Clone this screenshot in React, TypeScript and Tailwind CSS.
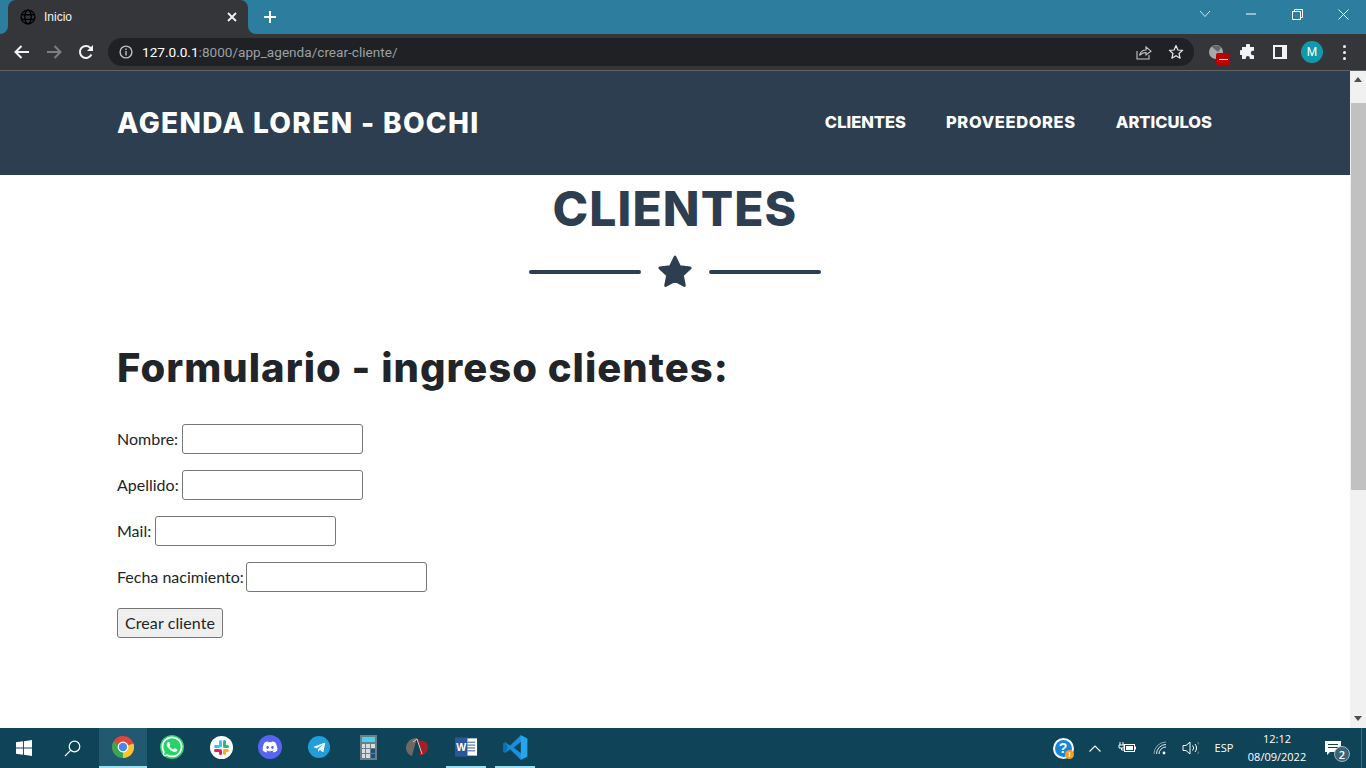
import React from "react";
import { FaWhatsapp, FaDiscord, FaTelegramPlane } from "react-icons/fa";

const Heading = { fontFamily: '"Inter", "Open Sans", sans-serif' };

function Star() {
  return (
    <svg width="36" height="34" viewBox="0 0 36 34">
      <path d="M18 2 L22.6 11.6 L33.2 13 L25.4 20.2 L27.4 30.6 L18 25.6 L8.6 30.6 L10.6 20.2 L2.8 13 L13.4 11.6 Z" fill="#2c3e50" stroke="#2c3e50" strokeWidth="2.8" strokeLinejoin="round" />
    </svg>
  );
}

function Field({ label, gap }: { label: string; gap: string }) {
  return (
    <p className="flex items-center h-[30px] mb-4">
      <label className={gap}>{label}</label>
      <input type="text" className="w-[181px] h-[30px] bg-white border border-[#767676] rounded-[3px]" />
    </p>
  );
}

function TabCorner({ flip }: { flip?: boolean }) {
  return (
    <svg width="8" height="8" viewBox="0 0 8 8" className={flip ? "-scale-x-100" : ""}>
      <path d="M8 0 V8 H0 A8 8 0 0 0 8 0 Z" fill="#35363a" />
    </svg>
  );
}

function TitleBar() {
  return (
    <div className="h-[34px] bg-[#2c7d9e] flex items-start pl-2 relative">
      <div className="w-[240px] h-[34px] bg-[#35363a] rounded-t-[8px] flex items-center pl-3 pr-[11px] text-white text-xs relative">
        <div className="absolute -left-2 bottom-0 flex"><TabCorner /></div>
        <div className="absolute -right-2 bottom-0 flex"><TabCorner flip /></div>
        <svg width="16" height="16" viewBox="0 0 16 16" fill="none" stroke="#000" strokeWidth="1.35">
          <circle cx="8" cy="8" r="6.9" />
          <ellipse cx="8" cy="8" rx="3.2" ry="6.9" />
          <path d="M1.2 5.7 H14.8 M1.2 10.3 H14.8" />
        </svg>
        <span className="ml-2 flex-1 text-[12px] text-[#f1f3f4]" style={{ fontFamily: '"Liberation Sans", sans-serif' }}>Inicio</span>
        <svg width="10" height="10" viewBox="0 0 10 10" stroke="#f1f3f4" strokeWidth="1.8"><path d="M1 1 L9 9 M9 1 L1 9" /></svg>
      </div>
      <svg width="14" height="14" viewBox="0 0 14 14" stroke="#fff" strokeWidth="2" className="ml-[15px] mt-2.5"><path d="M7 1 V13 M1 7 H13" /></svg>
      <div className="flex-1" />
      <div className="flex items-center h-[28px] text-white">
        <div className="w-[46px] flex justify-center"><svg width="12" height="8" viewBox="0 0 12 8" fill="none" stroke="#d5e6ee" strokeWidth="1"><path d="M1 1 L6 6.5 L11 1" /></svg></div>
        <div className="w-[46px] flex justify-center"><svg width="10" height="2" viewBox="0 0 10 2"><path d="M0 1 H10" stroke="#fff" strokeWidth="1" /></svg></div>
        <div className="w-[46px] flex justify-center"><svg width="11" height="11" viewBox="0 0 11 11" fill="none" stroke="#fff" strokeWidth="1"><path d="M0.5 2.5 H8.5 V10.5 H0.5 Z M2.5 2.5 V0.5 H10.5 V8.5 H8.5" /></svg></div>
        <div className="w-[46px] flex justify-center"><svg width="11" height="11" viewBox="0 0 11 11" stroke="#fff" strokeWidth="1"><path d="M0.5 0.5 L10.5 10.5 M10.5 0.5 L0.5 10.5" /></svg></div>
      </div>
    </div>
  );
}

function IconSlot({ w, children }: { w: string; children: React.ReactNode }) {
  return <div className={`${w} flex justify-center items-center shrink-0`}>{children}</div>;
}

function Toolbar() {
  return (
    <div className="h-[36px] bg-[#35363a] flex items-center border-b border-[#5f6368] box-content">
      <div className="w-[108px] flex items-center pl-[6px] shrink-0">
        <IconSlot w="w-8">
          <svg width="16" height="14" viewBox="0 0 16 14" fill="none" stroke="#f1f3f4" strokeWidth="2"><path d="M15 7 H2 M7.5 1 L1.5 7 L7.5 13" /></svg>
        </IconSlot>
        <IconSlot w="w-8">
          <svg width="16" height="14" viewBox="0 0 16 14" fill="none" stroke="#7d7f83" strokeWidth="2"><path d="M1 7 H14 M8.5 1 L14.5 7 L8.5 13" /></svg>
        </IconSlot>
        <IconSlot w="w-8">
          <svg width="16" height="16" viewBox="0 0 16 16" fill="none" stroke="#f1f3f4" strokeWidth="2"><path d="M13.4 10.5 A6 6 0 1 1 12.2 3.7 L14 5.5" /><path d="M15 1 V7 H9 Z" fill="#f1f3f4" stroke="none" /></svg>
        </IconSlot>
      </div>
      <div className="w-[1086px] h-[28px] bg-[#202124] rounded-full flex items-center pl-[11px] shrink-0">
        <svg width="14" height="14" viewBox="0 0 14 14" fill="none" stroke="#bdc1c6" strokeWidth="1.4" className="shrink-0"><circle cx="7" cy="7" r="5.9" /><path d="M7 6 V10.5 M7 3.4 V4.9" /></svg>
        <span className="ml-[9px] text-[13.6px] flex-1" style={{ fontFamily: '"Roboto", sans-serif' }}>
          <span className="text-white">127.0.0.1</span>
          <span className="text-[#9aa0a6]">:8000/app_agenda/crear-cliente/</span>
        </span>
        <IconSlot w="w-8">
          <svg width="16" height="15" viewBox="0 0 16 15" fill="none" stroke="#c4c7c9" strokeWidth="1.1"><path d="M1 6 V14 H13 V10" /><path d="M3.5 10.5 C4.5 6.5 7 5 10 5 V2 L15 6.2 L10 10 V7.5 C7.5 7.5 5.5 8.3 3.5 10.5 Z" /></svg>
        </IconSlot>
        <IconSlot w="w-8">
          <svg width="16" height="16" viewBox="0 0 16 16" fill="none" stroke="#e8eaed" strokeWidth="1.2" strokeLinejoin="round"><path d="M8 1.6 L9.9 6 L14.6 6.4 L11 9.5 L12.1 14.2 L8 11.7 L3.9 14.2 L5 9.5 L1.4 6.4 L6.1 6 Z" /></svg>
        </IconSlot>
        <div className="w-[2px]" />
      </div>
      <div className="flex items-center pl-[6px] flex-1">
        <IconSlot w="w-8">
          <div className="relative w-4 h-4">
            <svg width="16" height="16" viewBox="0 0 16 16"><circle cx="8" cy="8" r="7" fill="#a8a8a8" /><path d="M4 3 C6 1 11 1 13 4 L10 8 Z" fill="#666" /></svg>
            <div className="absolute left-[8px] top-[9px] w-[14px] h-[12px] bg-[#c00000] rounded-[2px] flex items-center justify-center"><div className="w-[9px] h-px bg-white" /></div>
          </div>
        </IconSlot>
        <IconSlot w="w-8">
          <svg width="16" height="16" viewBox="0 0 16 16" fill="#f1f3f4"><path d="M6 1.5 A2 2 0 0 1 10 1.5 V3 H14 V6.8 H13 A2.2 2.2 0 0 0 13 11.2 H14 V15 H9.8 V14 A2 2 0 0 0 5.8 14 V15 H2 V11 H1.5 A2.5 2.5 0 0 1 1.5 6 H2 V3 H6 Z" /></svg>
        </IconSlot>
        <IconSlot w="w-8">
          <svg width="14" height="14" viewBox="0 0 14 14"><path d="M0 0 H14 V14 H0 Z" fill="#f1f3f4" /><path d="M2 2 H9 V12 H2 Z" fill="#35363a" /></svg>
        </IconSlot>
        <IconSlot w="w-8">
          <div className="w-[22px] h-[22px] rounded-full bg-[#0f9aaa] flex items-center justify-center text-[12px] text-white" style={{ fontFamily: '"Roboto", sans-serif' }}>M</div>
        </IconSlot>
        <IconSlot w="w-8">
          <div className="flex flex-col gap-[3px]">
            <div className="w-[3px] h-[3px] rounded-full bg-[#f1f3f4]" />
            <div className="w-[3px] h-[3px] rounded-full bg-[#f1f3f4]" />
            <div className="w-[3px] h-[3px] rounded-full bg-[#f1f3f4]" />
          </div>
        </IconSlot>
      </div>
    </div>
  );
}

function Page() {
  return (
    <div className="flex-1 min-w-0 bg-white overflow-hidden" style={{ fontFamily: '"Lato", sans-serif' }}>
      <nav className="h-[104px] bg-[#2c3e50] flex items-center pl-[117px] pr-[138px] text-white" style={Heading}>
        <div className="text-[28px] font-extrabold flex-1 tracking-[1.35px]">AGENDA LOREN - BOCHI</div>
        <div className="flex gap-10 text-[16.5px] font-extrabold -mt-0.5">
          <span className="tracking-[0px]">CLIENTES</span>
          <span className="tracking-[0.6px]">PROVEEDORES</span>
          <span className="tracking-[0px]">ARTICULOS</span>
        </div>
      </nav>
      <div className="flex flex-col items-center text-[#2c3e50] pt-[5px]">
        <h1 className="text-[48px] leading-[58px] font-extrabold tracking-[1.1px]" style={Heading}>CLIENTES</h1>
        <div className="flex items-center gap-4 mt-[17px]">
          <div className="w-[112px] h-1 rounded bg-[#2c3e50]" />
          <Star />
          <div className="w-[112px] h-1 rounded bg-[#2c3e50]" />
        </div>
      </div>
      <div className="pl-[117px] pt-[55px] text-[#212529] text-[16px]">
        <h2 className="text-[40px] leading-[48px] font-extrabold mb-[32px] tracking-[1.02px]" style={Heading}>Formulario - ingreso clientes:</h2>
        <form>
          <Field label="Nombre:" gap="mr-[4px]" />
          <Field label="Apellido:" gap="mr-[3px]" />
          <Field label="Mail:" gap="mr-[4px]" />
          <Field label="Fecha nacimiento:" gap="mr-[2px]" />
          <button type="button" className="w-[106px] h-[30px] bg-[#efefef] border border-[#767676] rounded-[3px] text-[16px] tracking-[0.1px]">Crear cliente</button>
        </form>
      </div>
    </div>
  );
}

function Scrollbar() {
  return (
    <div className="w-4 bg-[#f1f1f1] flex flex-col items-center shrink-0">
      <div className="h-[17px] flex items-center"><svg width="8" height="5" viewBox="0 0 8 5"><path d="M4 0 L8 5 H0 Z" fill="#505050" /></svg></div>
      <div className="w-[15px] h-[387px] mt-[15px] bg-[#c1c1c1]" />
      <div className="flex-1" />
      <div className="h-[20px] flex items-center"><svg width="8" height="5" viewBox="0 0 8 5"><path d="M0 0 H8 L4 5 Z" fill="#505050" /></svg></div>
    </div>
  );
}

function Slot({ active, running, children }: { active?: boolean; running?: boolean; children: React.ReactNode }) {
  return (
    <div className="w-[49px] h-[40px] pr-px flex justify-center shrink-0">
      <div className={`h-[40px] flex items-center justify-center border-b-2 ${active ? "w-[48px] bg-[#215a70] border-[#99dff0]" : running ? "w-[40px] border-[#99dff0]" : "w-[40px] border-transparent"}`}>
        {children}
      </div>
    </div>
  );
}

function Taskbar() {
  return (
    <div className="h-[40px] bg-[#0f4358] flex items-center text-white shrink-0" style={{ fontFamily: '"Open Sans", sans-serif' }}>
      <div className="w-[48px] flex justify-center">
        <svg width="16" height="16" viewBox="0 0 17 17" fill="#fff"><path d="M0 2.4 L7.4 1.3 V8 H0 Z M8.4 1.2 L17 0 V8 H8.4 Z M0 9 H7.4 V15.7 L0 14.6 Z M8.4 9 H17 V17 L8.4 15.8 Z" /></svg>
      </div>
      <div className="w-[51px] pr-[3px] flex justify-center">
        <svg width="17" height="17" viewBox="0 0 17 17" fill="none" stroke="#fff" strokeWidth="1.2"><circle cx="10.5" cy="6.5" r="5.3" /><path d="M6.8 10.2 L1 16" /></svg>
      </div>
      <Slot active>
        <svg width="22" height="22" viewBox="0 0 22 22">
          <circle cx="11" cy="11" r="11" fill="#e0463a" />
          <path d="M11 11 L21.5 7.5 A11 11 0 0 1 11 22 Z" fill="#f8c62e" />
          <path d="M11 11 L11 22 A11 11 0 0 1 1.5 5.5 Z" fill="#34a853" />
          <circle cx="11" cy="11" r="5.4" fill="#fff" />
          <circle cx="11" cy="11" r="4.2" fill="#4a86e8" />
        </svg>
      </Slot>
      <Slot><FaWhatsapp size={24} color="#fff" className="rounded-full bg-[#25d366]" /></Slot>
      <Slot>
        <svg width="23" height="23" viewBox="0 0 23 23">
          <circle cx="11.5" cy="11.5" r="11.5" fill="#fff" />
          <rect x="9" y="4" width="3" height="7" rx="1.5" fill="#36c5f0" />
          <rect x="4" y="9" width="6" height="3" rx="1.5" fill="#36c5f0" />
          <rect x="13" y="4" width="3" height="7" rx="1.5" fill="#2eb67d" />
          <rect x="13" y="9" width="6" height="3" rx="1.5" fill="#2eb67d" />
          <rect x="13" y="13" width="6" height="3" rx="1.5" fill="#ecb22e" />
          <rect x="13" y="13" width="3" height="6" rx="1.5" fill="#ecb22e" />
          <rect x="4" y="13" width="6" height="3" rx="1.5" fill="#e01e5a" />
          <rect x="9" y="13" width="3" height="6" rx="1.5" fill="#e01e5a" />
        </svg>
      </Slot>
      <Slot>
        <div className="w-6 h-6 rounded-full bg-[#5865f2] flex items-center justify-center"><FaDiscord size={16} color="#fff" /></div>
      </Slot>
      <Slot>
        <div className="w-[22px] h-[22px] rounded-full bg-[#229ed9] flex items-center justify-center"><FaTelegramPlane size={13} color="#fff" /></div>
      </Slot>
      <Slot>
        <div className="w-[17px] h-[25px] bg-[#6b7f88] p-[2px] flex flex-col gap-[2px]">
          <div className="h-[5px] bg-[#4fd0ea]" />
          <div className="grid grid-cols-3 gap-px flex-1">
            {[0,1,2,3,4,5,6,7,8].map((i) => (
              <div key={i} className={i === 5 || i === 8 ? "bg-[#1d4f80]" : "bg-[#d5dde0]"} />
            ))}
          </div>
        </div>
      </Slot>
      <Slot>
        <svg width="24" height="20" viewBox="0 0 24 20">
          <path d="M12 1 C5 1 1 6 1 11 C1 15 4 18 7 19 L10 8 L12 1 Z" fill="#6d6a66" />
          <path d="M12 1 L16 12 L14 19 C20 18 23 15 23 10 C23 6 20 3 16 4 Z" fill="#a81e22" />
          <path d="M8 5 L12 2 L17 17" fill="none" stroke="#d8d0c8" strokeWidth="1" />
        </svg>
      </Slot>
      <Slot running>
        <svg width="23" height="22" viewBox="0 0 24 22">
          <rect x="8" y="2" width="15" height="18" fill="#fff" />
          <path d="M13 6 H21 M13 9 H21 M13 12 H21 M13 15 H21" stroke="#2b5797" strokeWidth="1" />
          <rect x="0" y="1" width="13" height="20" fill="#2b579a" />
          <text x="6.5" y="15" fontSize="11" fontWeight="700" fill="#fff" textAnchor="middle" fontFamily="Liberation Sans">W</text>
        </svg>
      </Slot>
      <Slot running>
        <svg width="25" height="25" viewBox="0 0 100 100">
          <path d="M71 99 L97 86 V14 L71 1 L28 43 L10 29 L2 33 V67 L10 71 L28 57 Z" fill="#1a8fdc" />
          <path d="M71 1 L97 14 V86 L71 99 Z" fill="#25a5ee" />
          <path d="M71 28 L43 50 L71 72 Z" fill="#0f4358" />
          <path d="M10 29 L2 33 V67 L10 71 L20 50 Z" fill="#0c6fb3" />
        </svg>
      </Slot>
      <div className="flex-1" />
      <div className="w-[30px] flex justify-center relative">
        <div className="w-[21px] h-[21px] rounded-full bg-white flex items-center justify-center">
          <div className="w-[17px] h-[17px] rounded-full bg-[#1686d9] text-white text-[14px] font-bold leading-[17px] text-center" style={{ fontFamily: '"Liberation Sans", sans-serif' }}>?</div>
        </div>
        <div className="absolute left-[17px] top-[12px] w-[9px] h-[9px] rounded-full bg-[#f0a020] text-[7px] leading-[9px] text-center font-bold">i</div>
      </div>
      <div className="w-[33px] flex justify-center">
        <svg width="12" height="7" viewBox="0 0 12 7" fill="none" stroke="#fff" strokeWidth="1.1"><path d="M0.5 6.5 L6 1 L11.5 6.5" /></svg>
      </div>
      <div className="w-[32px] flex justify-center">
        <svg width="18" height="12" viewBox="0 0 18 12" fill="none" stroke="#fff"><path d="M2 0 V3 M5 0 V3 M1 3 H6 V6 H1 Z M3.5 6 V8 H6" /><rect x="6.5" y="2.5" width="10" height="7" /><rect x="8" y="4" width="7" height="4" fill="#fff" stroke="none" /><path d="M17.5 4.5 V7.5" /></svg>
      </div>
      <div className="w-[33px] flex justify-center">
        <svg width="14" height="14" viewBox="0 0 14 14" fill="none" stroke="#e8eef0" strokeWidth="1"><path d="M1 13 A12 12 0 0 1 13 1" opacity="0.55" /><path d="M3.5 13 A9.5 9.5 0 0 1 13 3.5" /><path d="M6 13 A7 7 0 0 1 13 6" /><circle cx="11" cy="12" r="1.4" fill="#fff" stroke="none" /></svg>
      </div>
      <div className="w-[28px] flex justify-center">
        <svg width="17" height="14" viewBox="0 0 17 14" fill="none" stroke="#fff" strokeWidth="1"><path d="M1 4.5 H4 L8 1 V13 L4 9.5 H1 Z" /><path d="M10.5 4.5 A3.5 3.5 0 0 1 10.5 9.5" /><path d="M13 3 A6 6 0 0 1 13 11" /><path d="M15.5 1 A9 9 0 0 1 15.5 13" opacity="0.4" /></svg>
      </div>
      <div className="w-[40px] text-center text-[11px]">ESP</div>
      <div className="w-[66px] text-center text-[11px] leading-[18px]">
        <div>12:12</div>
        <div>08/09/2022</div>
      </div>
      <div className="w-[46px] flex justify-center relative">
        <svg width="16" height="14" viewBox="0 0 16 14"><path d="M0 0 H16 V11 H5 L2 14 V11 H0 Z" fill="#fff" /><path d="M3 3.5 H13 M3 6.5 H13" stroke="#0f4358" strokeWidth="1" /></svg>
        <div className="absolute left-[24px] top-[5px] w-[16px] h-[16px] rounded-full bg-[#39657a] border border-[#9fb6c1] flex items-center justify-center text-[11px] leading-none font-semibold">2</div>
      </div>
      <div className="w-[5px]" />
      <div className="w-px h-full bg-[#3f6c7f]" />
      <div className="w-[4px]" />
    </div>
  );
}

export default function App() {
  return (
    <div className="h-screen w-screen flex flex-col overflow-hidden">
      <TitleBar />
      <Toolbar />
      <div className="flex-1 min-h-0 flex">
        <Page />
        <Scrollbar />
      </div>
      <Taskbar />
    </div>
  );
}
